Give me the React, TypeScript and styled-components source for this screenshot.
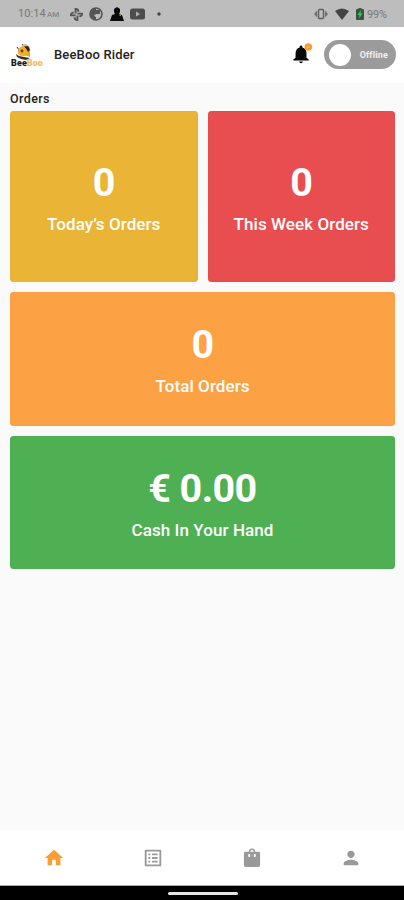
import React from 'react';
import styled, { createGlobalStyle } from 'styled-components';

const GlobalStyle = createGlobalStyle`
  * { box-sizing: border-box; }
  body { margin: 0; background: #fafafa; font-family: Roboto, sans-serif; }
`;

const Screen = styled.div`
  width: 404px;
  height: 900px;
  display: flex;
  flex-direction: column;
  background: #fafafa;
  overflow: hidden;
`;

const StatusBar = styled.div`
  height: 27px;
  flex: none;
  display: flex;
  align-items: center;
  justify-content: space-between;
  padding: 1px 17px 0 18px;
  background: #bdbdbd;
  color: #777;
  font-size: 11px;
  line-height: 14px;
`;

const StatusGroup = styled.div<{ $gap: number }>`
  display: flex;
  align-items: center;
  gap: ${(p) => p.$gap}px;
  svg { display: block; }
`;

const Clock = styled.div`
  width: 44px;
  margin-right: 1px;
  padding-top: 1px;
  white-space: nowrap;
  letter-spacing: 0.1px;
`;

const Meridiem = styled.span`
  font-size: 8px;
  letter-spacing: 0;
  margin-left: 1px;
`;

const Battery = styled.span`
  font-size: 11px;
  margin-left: -4.5px;
  padding-top: 1px;
  letter-spacing: -0.1px;
`;

const Header = styled.header`
  height: 56px;
  flex: none;
  display: flex;
  align-items: center;
  padding: 0 8px 0 10px;
  background: #fff;
`;

const Logo = styled.div`
  width: 34px;
  height: 26px;
  display: flex;
  flex-direction: column;
  align-items: center;
  margin-top: 2px;
  svg { display: block; flex: none; margin-right: 6px; }
`;

const Wordmark = styled.div`
  margin-top: -2px;
  font-size: 9px;
  line-height: 8px;
  font-weight: 900;
  letter-spacing: 0.05px;
  color: #191512;
  span { color: #f9b65c; }
`;

const Title = styled.h1`
  margin: 0 auto 0 10px;
  font-size: 13px;
  line-height: 18px;
  font-weight: 500;
  letter-spacing: 0.16px;
  color: #222;
`;

const Bell = styled.div`
  width: 24px;
  height: 24px;
  margin-right: 10px;
  svg { display: block; }
`;

const Toggle = styled.button`
  width: 72px;
  height: 29px;
  margin-top: -1px;
  padding: 0 8px 0 5px;
  border: 0;
  border-radius: 15px;
  display: flex;
  align-items: center;
  justify-content: space-between;
  background: #9b9b9b;
  color: #f1f1f1;
  font: 700 9px/12px Roboto, sans-serif;
  letter-spacing: 0.15px;
`;

const Knob = styled.span`
  width: 22px;
  height: 22px;
  border-radius: 50%;
  background: #fff;
`;

const Main = styled.main`
  flex: 1;
  padding: 7px 9px 0 10px;
`;

const SectionTitle = styled.h2`
  margin: 0;
  height: 20.5px;
  font-size: 12.5px;
  line-height: 17px;
  font-weight: 500;
  letter-spacing: 0.4px;
  color: #222;
`;

const Cards = styled.div`
  display: grid;
  grid-template-columns: 1fr 1fr;
  grid-template-rows: 171.5px 133.5px 133.5px;
  gap: 10px;
`;

const Card = styled.section<{ $color: string; $edge: string; $wide?: boolean }>`
  grid-column: ${(p) => (p.$wide ? '1 / -1' : 'auto')};
  display: flex;
  flex-direction: column;
  align-items: center;
  justify-content: center;
  border-radius: 4px;
  background: ${(p) => p.$color};
  box-shadow: inset 0 0 1px ${(p) => p.$edge};
  color: #fff;
`;

const Value = styled.div`
  padding-top: 1px;
  font-size: 39.5px;
  line-height: 47px;
  font-weight: 700;
  letter-spacing: -0.6px;
  white-space: pre;
`;

const Label = styled.div`
  margin-top: 8px;
  padding-bottom: 1px;
  font-size: 17px;
  line-height: 20px;
  font-weight: 500;
  letter-spacing: 0.08px;
`;

const NavBar = styled.nav`
  height: 56px;
  flex: none;
  display: grid;
  grid-template-columns: repeat(4, 1fr);
  align-items: center;
  justify-items: center;
  padding: 0 4px 0 5px;
  background: #fff;
  border-bottom: 1px solid #aaa;
`;

const NavItem = styled.div<{ $active?: boolean }>`
  width: 22px;
  height: 22px;
  color: ${(p) => (p.$active ? '#fc9d35' : '#999')};
  svg { display: block; fill: currentColor; }
`;

const GestureBar = styled.div`
  height: 14px;
  flex: none;
  display: flex;
  justify-content: center;
  padding: 6px 0 0 1px;
  background: #000;
`;

const GesturePill = styled.div`
  width: 70px;
  height: 3px;
  border-radius: 2px;
  background: #e4e4e4;
`;

const stats = [
  { value: '0', label: 'Today’s Orders', color: '#eab437', edge: '#dfa31f' },
  { value: '0', label: 'This Week Orders', color: '#e84e50', edge: '#d92f38' },
  { value: '0', label: 'Total Orders', color: '#fda145', edge: '#fa902a', wide: true },
  { value: '€ 0.00', label: 'Cash In Your Hand', color: '#4eb052', edge: '#36a13d', wide: true },
];

const navIcons = [
  'M10 20v-6h4v6h5v-8h3L12 3 2 12h3v8z',
  'M19 5v14H5V5h14m1.1-2H3.9c-.5 0-.9.4-.9.9v16.2c0 .4.4.9.9.9h16.2c.4 0 .9-.5.9-.9V3.9c0-.5-.5-.9-.9-.9zM11 7h6v2h-6V7zm0 4h6v2h-6v-2zm0 4h6v2h-6zM7 7h2v2H7zm0 4h2v2H7zm0 4h2v2H7z',
  'M19.300 5.200H15.500a3.500 3.500 0 0 0-7 0H4.700A1.500 1.500 0 0 0 3.200 6.700v13.600a1.500 1.500 0 0 0 1.500 1.500h14.600a1.500 1.500 0 0 0 1.500-1.500V6.700A1.500 1.500 0 0 0 19.300 5.200zM10 10a1 1 0 0 1-2 0V7.500h2v2.500zM10 5.200a2 2 0 0 1 4 0h-4zm6 4.800a1 1 0 0 1-2 0V7.500h2v2.500z',
  'M12 12c2.210 0 4-1.790 4-4s-1.790-4-4-4-4 1.790-4 4 1.790 4 4 4zm0 2c-2.670 0-8 1.340-8 4v2h16v-2c0-2.660-5.330-4-8-4z',
];

const Bee = () => (
  <svg width="20" height="18" viewBox="0 0 20 18">
    <path d="M5 7 3 4M9 3 8 1" stroke="#3c3326" strokeWidth="1" />
    <ellipse cx="12" cy="4.500" rx="4.500" ry="3" fill="#c4c5bd" transform="rotate(35 12 4.500)" />
    <ellipse cx="10" cy="8" rx="6.500" ry="5" fill="#f6ad28" transform="rotate(-18 10 8)" />
    <path d="M10 3.500 14 3l2 4-2 2c-1-2-2-4-4-5.500z" fill="#2b2418" />
    <circle cx="8" cy="8" r="1.400" fill="#594019" />
    <path d="m2 11 3 2 5 1 6 1-4 2-5-1-4-2z" fill="#3a3224" />
    <path d="m11 12 5-3v5z" fill="#eba12a" />
  </svg>
);

const LeftStatusIcons = () => (
  <>
    <svg width="13" height="13" viewBox="0 0 14 14" fill="none" stroke="#555" strokeWidth="2">
      <path d="M6 6V1a3 3 0 0 1 3 3M8 6h5a3 3 0 0 1-3 3M8 8v5a3 3 0 0 1-3-3M6 8H1a3 3 0 0 1 3-3" />
    </svg>
    <svg width="14" height="14" viewBox="0 0 14 14">
      <circle cx="7" cy="7" r="6" fill="none" stroke="#555" strokeWidth="1.600" />
      <path d="M1 4 4 1h3v12l-3-1-3-3zM7 3h4v4H7z" fill="#555" />
      <path d="M5.500 7.500h2V9l-1 1-1-1z" fill="#bdbdbd" />
    </svg>
    <svg width="14" height="14" viewBox="0 0 14 14">
      <path d="M4 5V2l3-2 3 2v3l-1 2 3 1 2 6H0l2-6 3-1z" fill="#0a0a0a" />
      <path d="m9 8 2.500-1-1 2.500z" fill="#aaa21b" />
    </svg>
    <svg width="15" height="12" viewBox="0 0 15 12">
      <rect width="15" height="11" y=".5" rx="2.500" fill="#4d4d4d" />
      <path d="m6 3.500 4 2.500-4 2.500z" fill="#b2b2b2" />
    </svg>
    <svg width="14" height="4" viewBox="0 0 14 4"><circle cx="7" cy="2" r="1.700" fill="#444" /></svg>
  </>
);

export default function App() {
  return (
    <>
      <GlobalStyle />
      <Screen>
        <StatusBar>
          <StatusGroup $gap={6.5}>
            <Clock>10:14<Meridiem>AM</Meridiem></Clock>
            <LeftStatusIcons />
          </StatusGroup>
          <StatusGroup $gap={7}>
            <svg width="14" height="12" viewBox="0 0 14 12">
              <path d="M3 2.500v7L0 6zm8 0v7L14 6z" fill="#707070" />
              <rect x="4.500" y="1.500" width="5" height="9" rx="1" fill="none" stroke="#606060" strokeWidth="1.500" />
            </svg>
            <svg width="14" height="12" viewBox="0 0 14 12"><path d="M0 3Q7-2 14 3L7 12z" fill="#444" /></svg>
            <svg width="8" height="12" viewBox="0 0 8 12">
              <path d="M2.500 0h3v1H7q1 0 1 1v9q0 1-1 1H1q-1 0-1-1V2q0-1 1-1h1.500z" fill="#405044" />
              <path d="M5 2 1.500 7h2L3 10.500 6.500 5.500h-2z" fill="#22d744" />
            </svg>
            <Battery>99%</Battery>
          </StatusGroup>
        </StatusBar>

        <Header>
          <Logo>
            <Bee />
            <Wordmark>Bee<span>Boo</span></Wordmark>
          </Logo>
          <Title>BeeBoo Rider</Title>
          <Bell>
            <svg width="24" height="24" viewBox="0 0 24 24">
              <path transform="translate(.1 .2) scale(.91)" d="M12 22a2 2 0 0 0 2-2h-4a2 2 0 0 0 2 2zm6-6v-5c0-3.070-1.640-5.640-4.500-6.320V4a1.500 1.500 0 0 0-3 0v.68C7.630 5.360 6 7.920 6 11v5l-2.500 2v1h17v-1z" fill="#080808" />
              <circle cx="18.300" cy="4" r="3.800" fill="#f99b32" />
              <circle cx="18.300" cy="4" r="1.300" fill="#fbb265" />
            </svg>
          </Bell>
          <Toggle type="button"><Knob />Offline</Toggle>
        </Header>

        <Main>
          <SectionTitle>Orders</SectionTitle>
          <Cards>
            {stats.map((s) => (
              <Card key={s.label} $color={s.color} $edge={s.edge} $wide={s.wide}>
                <Value>{s.value}</Value>
                <Label>{s.label}</Label>
              </Card>
            ))}
          </Cards>
        </Main>

        <NavBar>
          {navIcons.map((d, i) => (
            <NavItem key={d} $active={i === 0}>
              <svg width="22" height="22" viewBox="0 0 24 24"><path d={d} /></svg>
            </NavItem>
          ))}
        </NavBar>
        <GestureBar><GesturePill /></GestureBar>
      </Screen>
    </>
  );
}
